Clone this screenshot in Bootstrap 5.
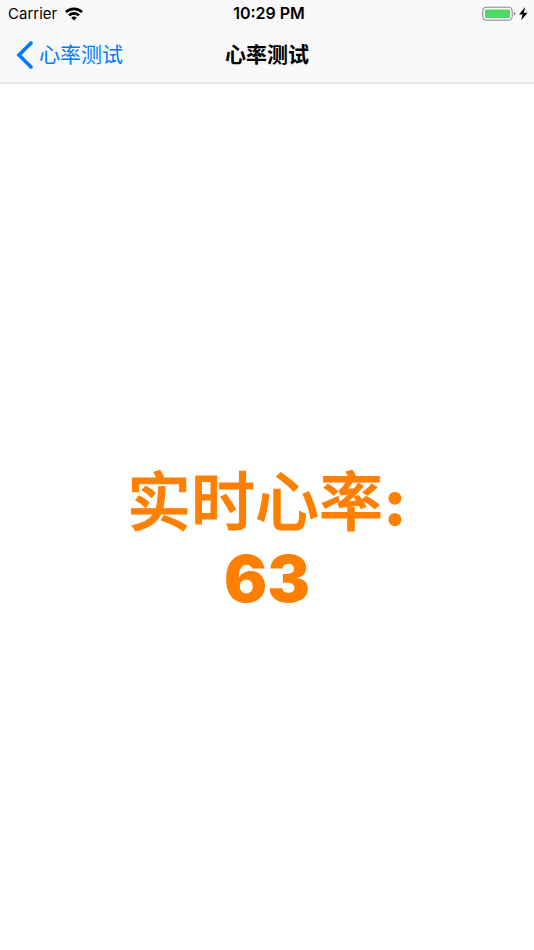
<!DOCTYPE html>
<html lang="zh-CN">
<head>
<meta charset="utf-8">
<meta name="viewport" content="width=device-width, initial-scale=1">
<title>心率测试</title>
<link href="https://cdn.jsdelivr.net/npm/bootstrap@5.3.0/dist/css/bootstrap.min.css" rel="stylesheet">
<style>
body { font-family: Inter, "Noto Sans CJK SC", sans-serif; color: #000; background: #fff; }
.top-area { background: #f9f9f9; border-bottom: 2px solid #e6e6e6; }
.status-bar { height: 27px; padding: 0 6px 0 8px; font-size: 15px; line-height: 27px; }
.side { flex: 1 1 0; }
.clock { font-size: 16px; font-weight: 600; padding-left: 2px; }
.title-bar { height: 55px; padding: 0 16px; }
.back-link { color: #007aff; font-size: 21px; line-height: 32px; gap: 6px; }
.page-title { font-size: 21px; line-height: 32px; font-weight: 700; }
.reading { color: #ff8000; font-size: 64px; line-height: 77px; font-weight: 900; padding-top: 46px; }
.reading-label { font-weight: 500; -webkit-text-stroke: 1px #ff8000; }
</style>
</head>
<body class="d-flex flex-column min-vh-100">
<header class="top-area">
  <div class="status-bar d-flex align-items-center">
    <div class="side d-flex align-items-center gap-2">
      <span>Carrier</span>
      <svg width="18" height="14" viewBox="0 0 18 14" aria-hidden="true"><g fill="none" stroke="#000" stroke-width="2.6"><path d="M1 5.2a11.3 11.3 0 0 1 16 0"/><path d="M4 8.4a7.1 7.1 0 0 1 10 0"/></g><path d="M9 13.6 6.2 10.8a4 4 0 0 1 5.6 0z"/></svg>
    </div>
    <span class="clock">10:29 PM</span>
    <div class="side d-flex align-items-center justify-content-end">
      <svg width="46" height="16" viewBox="0 0 46 16" role="img" aria-label="充电中"><rect x=".7" y="1.2" width="29.5" height="13" rx="3.5" fill="none" stroke="#858585"/><rect x="3" y="3.5" width="25" height="8.5" rx="1" fill="#4cd964"/><path d="M31.8 5.5q3.4 2.2 0 4.4z" fill="#858585"/><path d="M43.2 1 37 8.5h3.6l-1.4 5.8L45.6 6.8h-3.8z"/></svg>
    </div>
  </div>
  <nav class="title-bar d-flex align-items-center">
    <div class="side d-flex"><a href="#" class="back-link d-flex align-items-center text-decoration-none"><svg width="17" height="28" viewBox="0 0 17 28" aria-hidden="true"><path d="M15 2 3 14l12 12" fill="none" stroke="#007aff" stroke-width="3.6" stroke-linecap="round"/></svg><span>心率测试</span></a></div>
    <h1 class="page-title m-0">心率测试</h1>
    <div class="side"></div>
  </nav>
</header>
<main class="flex-grow-1 d-flex flex-column justify-content-center align-items-center text-center">
  <p class="reading m-0"><span class="reading-label">实时心率</span>:<br>63</p>
</main>
<script src="https://cdn.jsdelivr.net/npm/bootstrap@5.3.0/dist/js/bootstrap.bundle.min.js"></script>
</body>
</html>
